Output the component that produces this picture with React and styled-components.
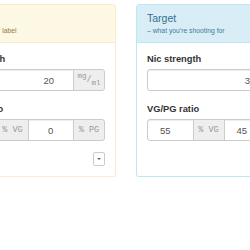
import React from "react";
import styled, { createGlobalStyle } from "styled-components";

const GlobalStyle = createGlobalStyle`
  html, body { margin: 0; padding: 0; background: #fff; overflow: hidden; }
  body { font-family: "Liberation Sans", Arial, sans-serif; }
  * { box-sizing: border-box; }
`;

const themes = {
  warning: { border: "#faebcc", bg: "#fcf8e3", color: "#8a6d3b" },
  info: { border: "#bce8f1", bg: "#d9edf7", color: "#31708f" },
};

const Row = styled.div`
  display: flex;
  gap: 20px;
  margin-left: -60px;
  padding-top: 4px;
  width: 400px;
`;

const Panel = styled.section`
  width: 176px;
  flex: none;
  background: #fff;
  border: 1px solid ${(p) => themes[p.$variant].border};
  border-radius: 3px;
  box-shadow: 0 1px 1px rgba(0, 0, 0, 0.05);
  display: flex;
  flex-direction: column;
`;

const Heading = styled.header`
  padding: 7px 10px 6px;
  background: ${(p) => themes[p.$variant].bg};
  color: ${(p) => themes[p.$variant].color};
  border-bottom: 1px solid ${(p) => themes[p.$variant].border};
  border-radius: 2px 2px 0 0;
`;

const Title = styled.h3`
  margin: 0;
  font-size: 10.5px;
  font-weight: normal;
  line-height: 12px;
`;

const Sub = styled.small`
  display: block;
  font-size: 6.8px;
  line-height: 10px;
  margin-top: 2px;
  opacity: 0.9;
`;

const Body = styled.div`
  padding: 10px;
`;

const FormGroup = styled.div`
  margin-bottom: 12px;
`;

const Label = styled.label`
  display: block;
  font-weight: bold;
  font-size: 9.3px;
  line-height: 13px;
  color: #333;
  margin-bottom: 3px;
`;

const InputGroup = styled.div`
  display: flex;
  height: 22px;
  & > * + * { margin-left: -1px; }
  & > :first-child { border-radius: 3px 0 0 3px; }
  & > :last-child { border-radius: 0 3px 3px 0; }
`;

const Input = styled.input`
  flex: 1;
  min-width: 0;
  height: 100%;
  border: 1px solid #ccc;
  background: #fff;
  font-family: "Liberation Sans", Arial, sans-serif;
  font-size: 9.5px;
  color: #555;
  padding: 0 ${(p) => p.$padRight}px 0 6px;
  text-align: ${(p) => p.$align};
  box-shadow: inset 0 1px 1px rgba(0, 0, 0, 0.075);
  outline: none;
`;

const Addon = styled.span`
  flex: none;
  width: 32px;
  height: 100%;
  display: flex;
  align-items: center;
  justify-content: center;
  background: #eee;
  border: 1px solid #ccc;
  color: #999;
  font-family: "Liberation Mono", "Courier New", monospace;
  font-size: 8.5px;
  white-space: pre;
  position: relative;
  z-index: 1;
  sup, sub { font-size: 7.5px; line-height: 0; }
`;

const Actions = styled.div`
  display: flex;
  justify-content: flex-end;
  margin-top: -1px;
`;

const Toggle = styled.button`
  width: 12px;
  height: 14px;
  padding: 0;
  border: 1px solid #ccc;
  border-radius: 2px;
  background: #fff;
  display: flex;
  align-items: center;
  justify-content: center;
  &::after {
    content: "";
    border-left: 2.5px solid transparent;
    border-right: 2.5px solid transparent;
    border-top: 2.5px solid #666;
  }
`;

function Ratio({ vg, pg, padRight }) {
  return (
    <InputGroup>
      <Input $align="center" $padRight={padRight} defaultValue={vg} />
      <Addon>% VG</Addon>
      <Input $align="center" $padRight={padRight} defaultValue={pg} />
      <Addon>% PG</Addon>
    </InputGroup>
  );
}

function Strength({ value }) {
  return (
    <InputGroup>
      <Input $align="right" $padRight={19} defaultValue={value} />
      <Addon>
        <span>
          <sup>mg</sup>/<sub>ml</sub>
        </span>
      </Addon>
    </InputGroup>
  );
}

export default function App() {
  return (
    <>
      <GlobalStyle />
      <Row>
        <Panel $variant="warning">
          <Heading $variant="warning">
            <Title>Base</Title>
            <Sub>– what's on your label</Sub>
          </Heading>
          <Body>
            <FormGroup>
              <Label>Nic strength</Label>
              <Strength value="20" />
            </FormGroup>
            <FormGroup>
              <Label>VG/PG ratio</Label>
              <Ratio vg="100" pg="0" padRight={6} />
            </FormGroup>
            <Actions>
              <Toggle aria-label="More" />
            </Actions>
          </Body>
        </Panel>
        <Panel $variant="info">
          <Heading $variant="info">
            <Title>Target</Title>
            <Sub>– what you're shooting for</Sub>
          </Heading>
          <Body>
            <FormGroup>
              <Label>Nic strength</Label>
              <Strength value="3" />
            </FormGroup>
            <FormGroup>
              <Label>VG/PG ratio</Label>
              <Ratio vg="55" pg="45" padRight={16} />
            </FormGroup>
          </Body>
        </Panel>
      </Row>
    </>
  );
}
